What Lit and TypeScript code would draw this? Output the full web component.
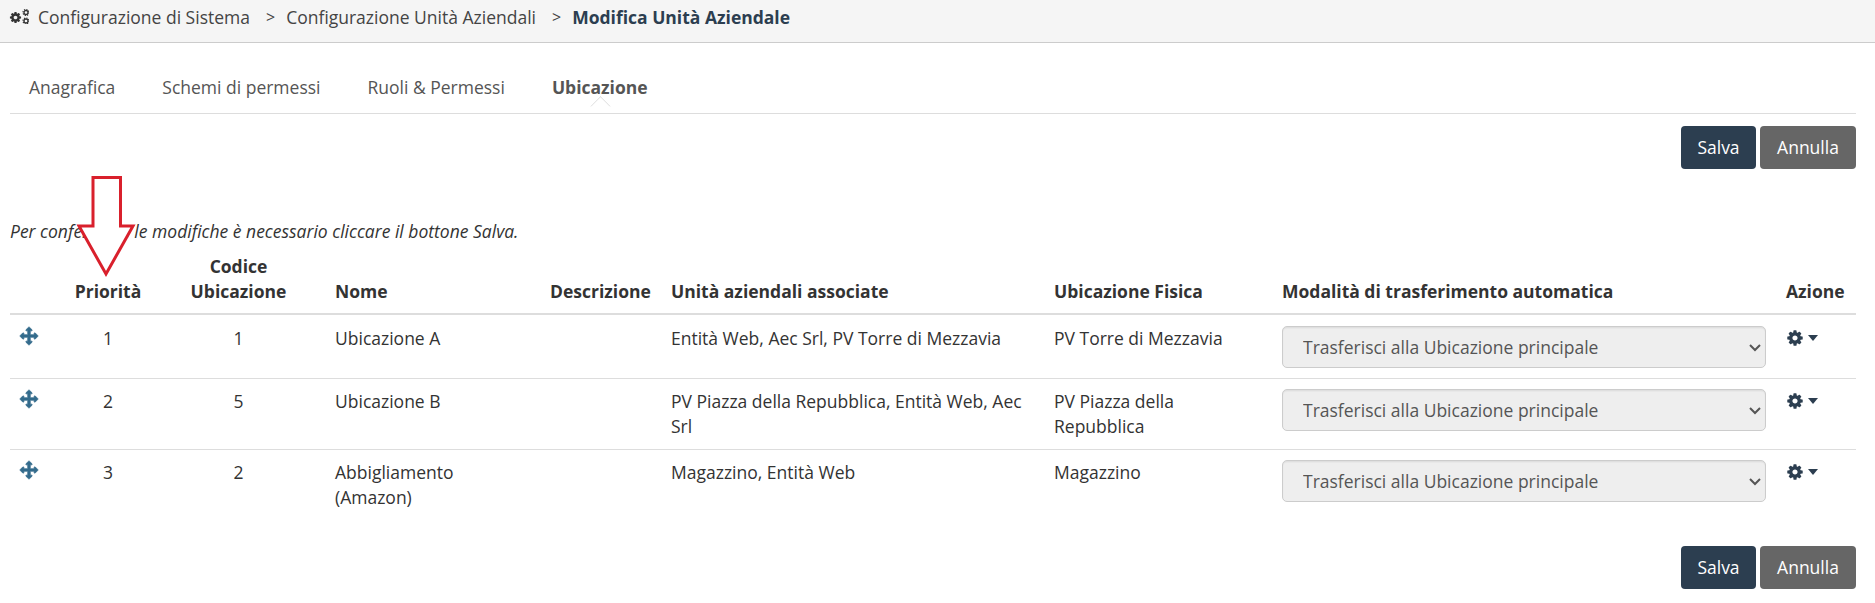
import { LitElement, html, css, svg } from "lit";
import { customElement } from "lit/decorators.js";

const COG = "M1152 896q0-106-75-181t-181-75-181 75-75 181 75 181 181 75 181-75 75-181zm512-109v222q0 12-8 24t-20 13l-185 28q-19 54-39 91 35 50 107 138 10 12 10 25t-9 23q-27 37-99 108t-94 71q-12 0-26-9l-138-108q-44 23-91 38-16 136-29 186-7 28-36 28h-222q-14 0-24.5-8.5t-11.5-21.5l-28-184q-49-16-90-37l-141 107q-10 9-25 9-14 0-25-11-126-114-165-168-7-10-7-23 0-12 8-23 15-21 51-66.5t54-70.5q-27-50-41-99l-183-27q-13-2-21-12.5t-8-23.5v-222q0-12 8-23t19-13l186-28q14-46 39-92-40-57-107-138-10-12-10-24 0-10 9-23 26-36 98.5-107.5t94.5-71.5q13 0 26 10l138 107q44-23 91-38 16-136 29-186 7-28 36-28h222q14 0 24.5 8.5t11.5 21.5l28 184q49 16 90 37l142-107q9-9 24-9 13 0 25 10 129 119 165 170 7 8 7 22 0 12-8 23-15 21-51 66.5t-54 70.5q26 50 41 98l183 28q13 2 21 12.5t8 23.5z";
const MOVE = "M1792 896q0 26-19 45l-256 256q-19 19-45 19t-45-19-19-45v-128h-384v384h128q26 0 45 19t19 45-19 45l-256 256q-19 19-45 19t-45-19l-256-256q-19-19-19-45t19-45 45-19h128v-384h-384v128q0 26-19 45t-45 19-45-19l-256-256q-19-19-19-45t19-45l256-256q19-19 45-19t45 19 19 45v128h384v-384h-128q-26 0-45-19t-19-45 19-45l256-256q19-19 45-19t45 19l256 256q19 19 19 45t-19 45-45 19h-128v384h384v-128q0-26 19-45t45-19 45 19l256 256q19 19 19 45z";

const rows = [
  { p: "1", c: "1", n: "Ubicazione A", u: "Entità Web, Aec Srl, PV Torre di Mezzavia", f: "PV Torre di Mezzavia" },
  { p: "2", c: "5", n: "Ubicazione B", u: "PV Piazza della Repubblica, Entità Web, Aec Srl", f: "PV Piazza della Repubblica" },
  { p: "3", c: "2", n: "Abbigliamento (Amazon)", u: "Magazzino, Entità Web", f: "Magazzino" },
];

const smallCog = (cx: number, cy: number) => svg`
  <circle cx="${cx}" cy="${cy}" r="2" fill="none" stroke="#333" stroke-width="1.3" />
  <circle cx="${cx}" cy="${cy}" r="3" fill="none" stroke="#333" stroke-width="1.2" stroke-dasharray="1.2 1.15" />`;

@customElement("app-root")
export class AppRoot extends LitElement {
  static styles = css`
    :host {
      display: block;
      position: relative;
      width: 1875px;
      height: 603px;
      overflow: hidden;
      background: #fff;
      font-family: "Open Sans", sans-serif;
      font-size: 17.5px;
      line-height: 25px;
      color: #333;
    }
    .crumbs {
      display: flex;
      align-items: center;
      padding: 0 0 8px 9px;
      box-sizing: border-box;
      background: #f5f5f5;
      border-bottom: 1px solid #ccc;
      height: 43px;
      color: #444;
      white-space: pre;
    }
    .crumbs svg.cogs { width: 20px; height: 16px; margin: -2px 9px 0 0; fill: #333; flex: none; }
    .crumbs .sep { margin: 0 11px 0 16px; font-size: 16px; }
    .crumbs b { color: #2c3e50; font-weight: 700; }
    .tabs {
      display: flex;
      gap: 9px;
      margin: 27px 19px 0 10px;
      height: 43px;
      border-bottom: 1px solid #ddd;
    }
    .tab { padding: 5px 19px 0; height: 30px; color: #555; }
    .tab.active { position: relative; font-weight: 700; color: #555; }
    .tab.active::after {
      content: "";
      position: absolute;
      left: 50%;
      bottom: -9px;
      width: 14px;
      height: 14px;
      margin-left: -7px;
      background: #fff;
      border-left: 1px solid #ddd;
      border-top: 1px solid #ddd;
      transform: rotate(45deg);
      clip-path: polygon(0 0, 100% 0, 0 100%);
    }
    .actions {
      display: flex;
      justify-content: flex-end;
      gap: 4px;
      margin: 0 19px 0 10px;
    }
    .actions.top { margin-top: 12px; }
    .actions.bottom { margin-top: 26px; }
    button {
      height: 43px;
      padding: 0;
      border: 0;
      border-radius: 4px;
      color: #fff;
      font: inherit;
    }
    .save { width: 75px; background: #2c3e50; }
    .cancel { width: 96px; background: #666; }
    .note { margin: 50px 19px 0 10px; font-style: italic; color: #333; }
    table {
      table-layout: fixed;
      border-collapse: separate;
      border-spacing: 0;
      width: 1846px;
      margin: 0 19px 0 10px;
    }
    col.c0 { width: 54px; }
    col.c1 { width: 88px; }
    col.c2 { width: 173px; }
    col.c3 { width: 215px; }
    col.c4 { width: 121px; }
    col.c5 { width: 383px; }
    col.c6 { width: 228px; }
    col.c7 { width: 504px; }
    col.c8 { width: 80px; }
    th, td { padding: 10px; vertical-align: top; text-align: left; }
    th { vertical-align: bottom; font-weight: 700; border-bottom: 2px solid #ddd; color: #333; padding-bottom: 9px; }
    td { border-top: 1px solid #ddd; }
    tbody tr:first-child td { border-top: 0; padding-top: 11px; }
    th.ctr, td.ctr { text-align: center; }
    .move { display: block; width: 18px; height: 18px; margin-top: 1px; fill: #336b8c; stroke: #336b8c; stroke-width: 70; overflow: visible; }
    select {
      display: block;
      zoom: 1.25;
      width: 387.2px;
      height: 33.6px;
      box-sizing: border-box;
      padding: 0 9.6px 0 12px;
      border: 1px solid #ccc;
      border-radius: 4px;
      background-color: #eee;
      color: #555;
      opacity: 1;
      font-family: inherit;
      font-size: 14px;
      box-shadow: inset 0 1px 1px rgba(0, 0, 0, 0.075);
    }
    .act { display: flex; align-items: center; gap: 4px; margin-top: 3px; height: 18px; }
    .act svg { width: 18px; height: 18px; fill: #2c3e50; }
    .caret { width: 0; height: 0; border-left: 5.5px solid transparent; border-right: 5.5px solid transparent; border-top: 6px solid #2c3e50; }
    .arrow { position: absolute; left: 76px; top: 174px; width: 60px; height: 106px; }
  `;

  private buttons(cls: string) {
    return html`<div class="actions ${cls}"><button class="save">Salva</button><button class="cancel">Annulla</button></div>`;
  }

  render() {
    return html`
      <div class="crumbs">
        <svg class="cogs" viewBox="0 0 20 16">
          ${svg`<svg x="0" y="3" width="13" height="13" viewBox="0 0 1792 1792"><path fill-rule="evenodd" d="${COG}"/></svg>`}
          ${smallCog(17, 4.5)}
          ${smallCog(17, 13)}
        </svg>
        <span>Configurazione di Sistema</span><span class="sep">&gt;</span><span>Configurazione Unità Aziendali</span><span class="sep">&gt;</span><b>Modifica Unità Aziendale</b>
      </div>
      <div class="tabs">
        <div class="tab">Anagrafica</div>
        <div class="tab">Schemi di permessi</div>
        <div class="tab">Ruoli &amp; Permessi</div>
        <div class="tab active">Ubicazione</div>
      </div>
      ${this.buttons("top")}
      <div class="note">Per confermare le modifiche è necessario cliccare il bottone Salva.</div>
      <table>
        <colgroup>
          ${[0, 1, 2, 3, 4, 5, 6, 7, 8].map((i) => html`<col class="c${i}" />`)}
        </colgroup>
        <thead>
          <tr>
            <th></th>
            <th class="ctr">Priorità</th>
            <th class="ctr">Codice Ubicazione</th>
            <th>Nome</th>
            <th>Descrizione</th>
            <th>Unità aziendali associate</th>
            <th>Ubicazione Fisica</th>
            <th>Modalità di trasferimento automatica</th>
            <th>Azione</th>
          </tr>
        </thead>
        <tbody>
          ${rows.map(
            (r) => html`<tr>
              <td><svg class="move" viewBox="0 0 1792 1792"><path d="${MOVE}" /></svg></td>
              <td class="ctr">${r.p}</td>
              <td class="ctr">${r.c}</td>
              <td>${r.n}</td>
              <td></td>
              <td>${r.u}</td>
              <td>${r.f}</td>
              <td><select disabled><option>Trasferisci alla Ubicazione principale</option></select></td>
              <td><div class="act"><svg viewBox="0 0 1792 1792"><path fill-rule="evenodd" d="${COG}" /></svg><span class="caret"></span></div></td>
            </tr>`
          )}
        </tbody>
      </table>
      ${this.buttons("bottom")}
      <svg class="arrow" viewBox="0 0 60 106">
        <path d="M17 3.5H44.5V52H57L30 100 3 52H17Z" fill="#fff" stroke="#d9202c" stroke-width="3" />
      </svg>
    `;
  }
}
